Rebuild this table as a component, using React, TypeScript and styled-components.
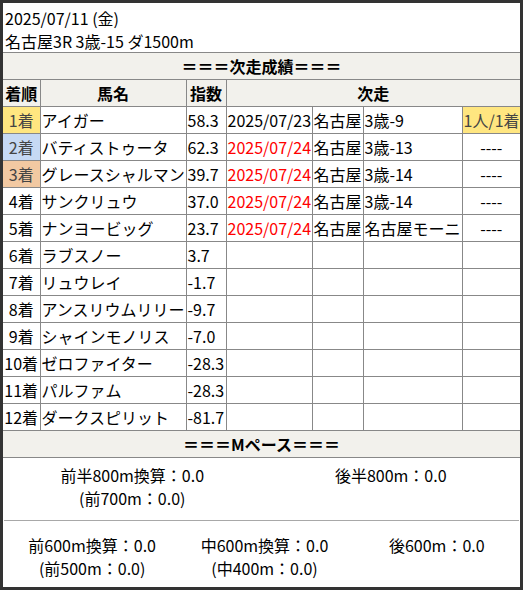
import styled, { createGlobalStyle } from 'styled-components'

const GlobalStyle = createGlobalStyle`
  html, body {
    margin: 0;
    padding: 0;
    background: #ffffff;
  }
  body {
    font-family: "Noto Sans CJK JP", "Noto Sans", sans-serif;
    font-size: 16px;
    color: #000;
  }
`

type Row = {
  rank: string
  name: string
  index: string
  date?: string
  late?: boolean
  place?: string
  race?: string
  result?: string
}

const rows: Row[] = [
  { rank: '1着', name: 'アイガー', index: '58.3', date: '2025/07/23', place: '名古屋', race: '3歳-9', result: '1人/1着' },
  { rank: '2着', name: 'バティストゥータ', index: '62.3', date: '2025/07/24', late: true, place: '名古屋', race: '3歳-13', result: '----' },
  { rank: '3着', name: 'グレースシャルマン', index: '39.7', date: '2025/07/24', late: true, place: '名古屋', race: '3歳-14', result: '----' },
  { rank: '4着', name: 'サンクリュウ', index: '37.0', date: '2025/07/24', late: true, place: '名古屋', race: '3歳-14', result: '----' },
  { rank: '5着', name: 'ナンヨービッグ', index: '23.7', date: '2025/07/24', late: true, place: '名古屋', race: '名古屋モーニ', result: '----' },
  { rank: '6着', name: 'ラブスノー', index: '3.7' },
  { rank: '7着', name: 'リュウレイ', index: '-1.7' },
  { rank: '8着', name: 'アンスリウムリリー', index: '-9.7' },
  { rank: '9着', name: 'シャインモノリス', index: '-7.0' },
  { rank: '10着', name: 'ゼロファイター', index: '-28.3' },
  { rank: '11着', name: 'パルファム', index: '-28.3' },
  { rank: '12着', name: 'ダークスピリット', index: '-81.7' },
]

const rankColors: Record<string, string> = {
  '1着': '#ffe680',
  '2着': '#c6d9f4',
  '3着': '#f2c9a2',
}

export default function App() {
  return (
    <>
      <GlobalStyle />
      <Frame>
        <RaceHeader>
          <div>2025/07/11 (金)</div>
          <div>名古屋3R 3歳-15 ダ1500m</div>
        </RaceHeader>

        <SectionTitle>＝＝＝次走成績＝＝＝</SectionTitle>

        <Table>
          <colgroup>
            <col style={{ width: 37 }} />
            <col style={{ width: 146 }} />
            <col style={{ width: 40 }} />
            <col style={{ width: 86 }} />
            <col style={{ width: 51 }} />
            <col style={{ width: 99 }} />
            <col style={{ width: 58 }} />
          </colgroup>
          <thead>
            <tr>
              <Th>着順</Th>
              <Th>馬名</Th>
              <Th>指数</Th>
              <Th colSpan={4}>次走</Th>
            </tr>
          </thead>
          <tbody>
            {rows.map((r) => (
              <tr key={r.rank}>
                <Td $align="center" $bg={rankColors[r.rank]} $muted={!!rankColors[r.rank]}>
                  {r.rank}
                </Td>
                <Td>{r.name}</Td>
                <Td>{r.index}</Td>
                <Td $red={r.late}>{r.date}</Td>
                <Td>{r.place}</Td>
                <Td>{r.race}</Td>
                <Td
                  $align="center"
                  $bg={r.result === '1人/1着' ? '#ffe680' : undefined}
                  $muted={r.result === '1人/1着'}
                >
                  {r.result}
                </Td>
              </tr>
            ))}
          </tbody>
        </Table>

        <PaceTitle>＝＝＝Mペース＝＝＝</PaceTitle>

        <PaceBlock $cols={2} $top={6} $bottom={10}>
          <PaceItem>
            <div>前半800m換算：0.0</div>
            <div>(前700m：0.0)</div>
          </PaceItem>
          <PaceItem>
            <div>後半800m：0.0</div>
          </PaceItem>
        </PaceBlock>

        <Divider />

        <PaceBlock $cols={3} $top={13} $bottom={5} $shift={3}>
          <PaceItem>
            <div>前600m換算：0.0</div>
            <div>(前500m：0.0)</div>
          </PaceItem>
          <PaceItem>
            <div>中600m換算：0.0</div>
            <div>(中400m：0.0)</div>
          </PaceItem>
          <PaceItem>
            <div>後600m：0.0</div>
          </PaceItem>
        </PaceBlock>
      </Frame>
    </>
  )
}

const Frame = styled.div`
  width: 523px;
  height: 590px;
  box-sizing: border-box;
  border: 3px solid #333333;
  background: #ffffff;
  overflow: hidden;
`

const RaceHeader = styled.div`
  padding: 4px 2px 0;
  height: 50px;
  box-sizing: border-box;
  line-height: 23px;
  border-bottom: 1px solid #888888;
`

const SectionTitle = styled.div`
  height: 26px;
  line-height: 26px;
  text-align: center;
  font-weight: 700;
  background: #f2f1ec;
  border-bottom: 1px solid #888888;
`

const Table = styled.table`
  width: 517px;
  table-layout: fixed;
  border-collapse: collapse;
  border-style: hidden;
`

const Th = styled.th`
  height: 26px;
  padding: 0 1px;
  background: #f2f1ec;
  border: 1px solid #888888;
  font-weight: 700;
  text-align: center;
  white-space: nowrap;
  overflow: hidden;
`

const Td = styled.td<{ $align?: string; $bg?: string; $red?: boolean; $muted?: boolean }>`
  height: 26px;
  padding: 0 1px;
  border: 1px solid #888888;
  text-align: ${(p) => p.$align || 'left'};
  background: ${(p) => p.$bg || '#ffffff'};
  color: ${(p) => (p.$red ? '#ff0000' : p.$muted ? '#444444' : '#000000')};
  white-space: nowrap;
  overflow: hidden;
`

const PaceTitle = styled(SectionTitle)`
  border-top: 1px solid #888888;
`

const PaceBlock = styled.div<{ $cols: number; $top: number; $bottom: number; $shift?: number }>`
  display: grid;
  grid-template-columns: repeat(${(p) => p.$cols}, 1fr);
  padding: ${(p) => p.$top}px 0 ${(p) => p.$bottom}px;
  margin: 0 ${(p) => -(p.$shift || 0)}px 0 ${(p) => p.$shift || 0}px;
  line-height: 23px;
`

const PaceItem = styled.div`
  text-align: center;
`

const Divider = styled.hr`
  margin: 0 1px;
  border: none;
  border-top: 1px solid #a8a8a8;
`
